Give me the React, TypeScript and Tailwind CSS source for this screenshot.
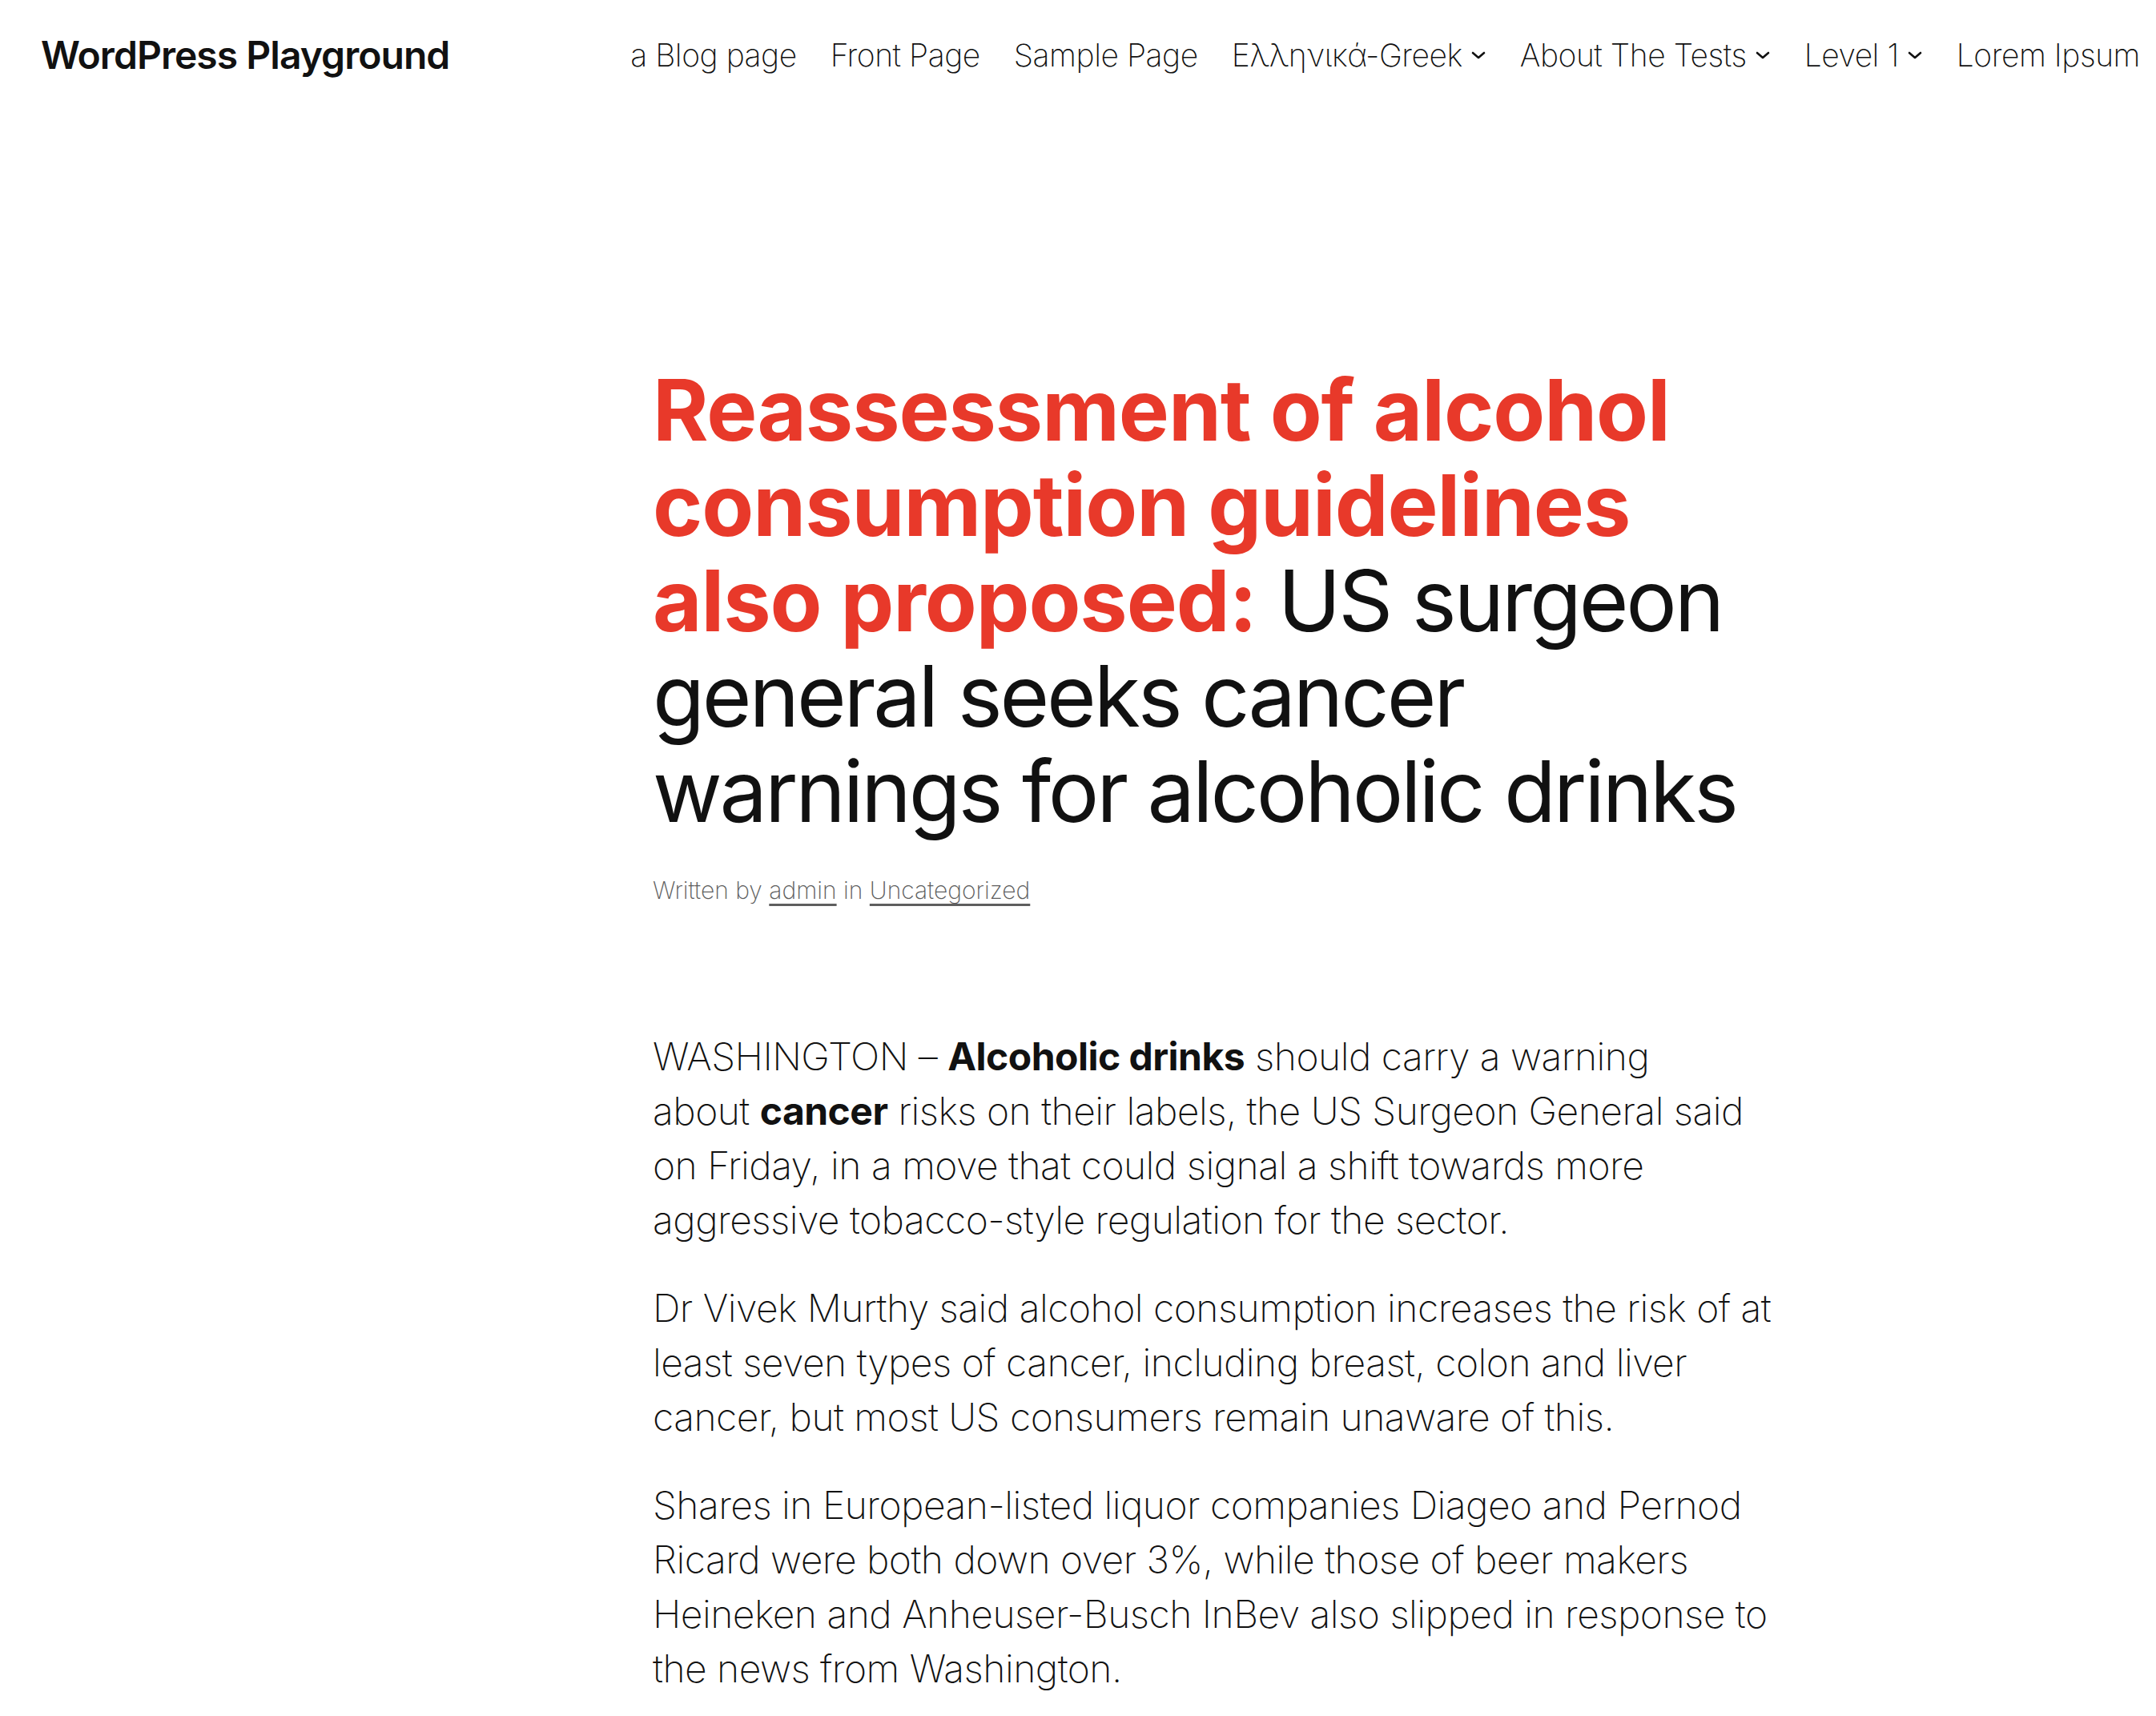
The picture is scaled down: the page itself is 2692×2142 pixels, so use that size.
import React from 'react';

const navItems = [
  { label: 'a Blog page', sub: false },
  { label: 'Front Page', sub: false },
  { label: 'Sample Page', sub: false },
  { label: 'Ελληνικά-Greek', sub: true },
  { label: 'About The Tests', sub: true },
  { label: 'Level 1', sub: true },
  { label: 'Lorem Ipsum', sub: false },
];

function Chevron() {
  return (
    <svg className="ml-[10px] h-[12px] w-[20px]" viewBox="0 0 20 12" fill="none" stroke="currentColor" strokeWidth="2.6" strokeLinecap="round" strokeLinejoin="round">
      <path d="M3 3l7 6 7-6" />
    </svg>
  );
}

export default function App() {
  return (
    <div className="min-h-screen bg-white text-[#111111]" style={{ fontFamily: 'Inter, "Noto Sans", sans-serif' }}>
      {/* header */}
      <header className="flex items-center justify-between pl-[51px] pr-[20px] pt-[36px]">
        <a href="#" className="text-[48px] font-semibold leading-[66px] tracking-[-0.02em] text-[#111111]">
          WordPress Playground
        </a>
        <nav className="flex items-center gap-[42px] text-[39px] font-[250] leading-[66px] tracking-[-0.012em]">
          {navItems.map((item) => (
            <a key={item.label} href="#" className="flex items-center">
              <span>{item.label}</span>
              {item.sub && <Chevron />}
            </a>
          ))}
        </nav>
      </header>

      {/* post */}
      <main className="ml-[815px] w-[1400px] pt-[350px]">
        <h1 className="text-[106px] font-normal leading-[119px] tracking-[-0.03em]">
          <strong className="font-bold tracking-[-0.01em] text-[#e8392a]">
            Reassessment of alcohol consumption guidelines also proposed:
          </strong>{' '}
          US surgeon general seeks cancer warnings for alcoholic drinks
        </h1>

        <div className="mt-[42px] text-[30px] font-[250] leading-[44px] text-[#5e5e5e]">
          Written by <a href="#" className="underline underline-offset-[6px]">admin</a> in{' '}
          <a href="#" className="underline underline-offset-[6px]">Uncategorized</a>
        </div>

        <div className="mt-[152px] text-[48px] font-[250] leading-[68px] tracking-[-0.011em]">
          <p>
            WASHINGTON – <strong className="font-bold">Alcoholic drinks</strong> should carry a warning
            <br />
            about <strong className="font-bold">cancer</strong> risks on their labels, the US Surgeon General said on
            Friday, in a move that could signal a shift towards more aggressive tobacco-style regulation for the sector.
          </p>
          <p className="mt-[42px]">
            Dr Vivek Murthy said alcohol consumption increases the risk of at least seven types of cancer, including breast,
            colon and liver cancer, but most US consumers remain unaware of this.
          </p>
          <p className="mt-[42px]">
            Shares in European-listed liquor companies Diageo and Pernod Ricard were both down over 3%, while those of beer
            makers Heineken and Anheuser-Busch InBev also slipped in response to the news from Washington.
          </p>
        </div>
      </main>
    </div>
  );
}
